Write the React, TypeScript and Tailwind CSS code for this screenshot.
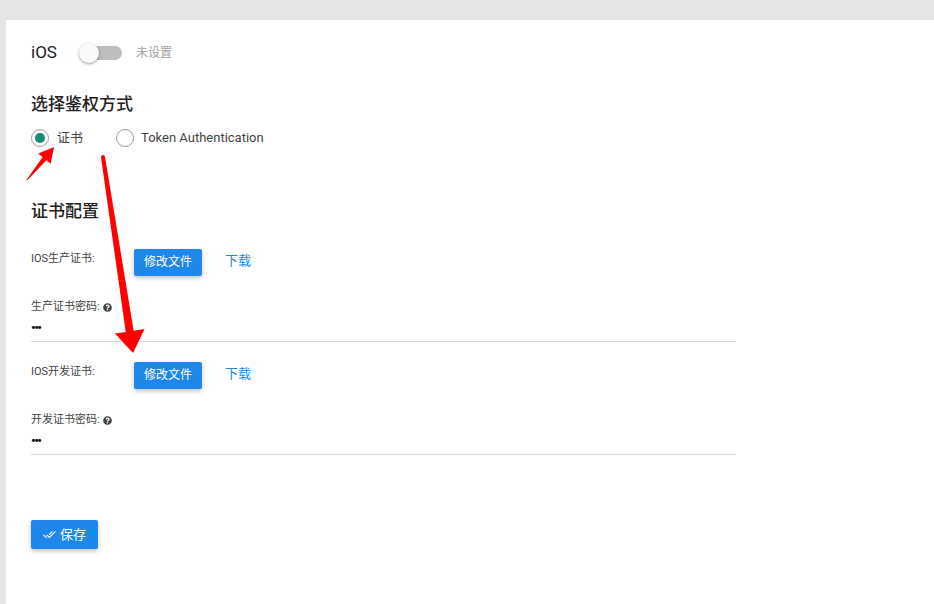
import React from "react";
import { FaQuestionCircle } from "react-icons/fa";
import { MdDoneAll } from "react-icons/md";

const font = { fontFamily: "Roboto, 'Noto Sans CJK SC', sans-serif" };

function CertRow({ label }: { label: string }) {
  return (
    <div className="flex items-start">
      <div className="w-[103px] pt-[2px] text-[11px] leading-[16px] text-[#424242]">{label}</div>
      <button className="h-[27px] px-[10px] rounded-[2px] bg-[#1f86ea] text-white text-[12px] leading-[27px] shadow-[0_2px_4px_rgba(0,0,0,0.25)]">
        修改文件
      </button>
      <span className="ml-[23px] mt-[4px] text-[13px] leading-[16px] text-[#1e88e5]">下载</span>
    </div>
  );
}

function PwdField({ label }: { label: string }) {
  return (
    <div className="w-[705px]">
      <div className="pt-[2px] flex items-center gap-[3px] text-[11px] leading-[16px] text-[#424242]">
        <span>{label}</span>
        <FaQuestionCircle className="w-[9px] h-[9px] text-[#424242]" />
      </div>
      <div className="mt-[3px] h-[24px] border-b border-[#d6d6d6]">
        <span className="block pt-[1px] text-[13px] leading-[18px] font-bold tracking-[-1.5px] text-[#111]">•••</span>
      </div>
    </div>
  );
}

export default function App() {
  return (
    <div className="relative w-[934px] h-[604px] bg-[#e5e5e5] pt-[20px] pl-[6px] overflow-hidden" style={font}>
      <div className="h-[584px] bg-white pl-[25px] pt-[13px]">
        {/* iOS row */}
        <div className="flex items-center h-[40px]">
          <span className="w-[48px] text-[17px] text-[#212121]">iOS</span>
          <div className="relative w-[43px] h-[20px] flex items-center justify-end">
            <div className="w-[34px] h-[14px] rounded-full bg-[#bdbdbd]" />
            <div className="absolute left-0 top-0 w-[20px] h-[20px] rounded-full bg-[#fafafa] shadow-[0_1px_3px_rgba(0,0,0,0.4)]" />
          </div>
          <span className="ml-[14px] text-[12px] text-[#9e9e9e]">未设置</span>
        </div>

        <div className="mt-[19px] h-[24px] leading-[24px] text-[17px] font-medium text-[#212121]">选择鉴权方式</div>

        <div className="mt-[10px] h-[24px] flex items-center">
          <div className="w-[18px] h-[18px] rounded-full border-[1.5px] border-[#9e9e9e] flex items-center justify-center">
            <div className="w-[10px] h-[10px] rounded-full bg-[#128a74]" />
          </div>
          <span className="ml-[8px] text-[13px] text-[#424242]">证书</span>
          <div className="ml-[33px] w-[18px] h-[18px] rounded-full border-[1.5px] border-[#9e9e9e]" />
          <span className="ml-[7px] text-[13px] text-[#424242]">Token Authentication</span>
        </div>

        <div className="mt-[49px] h-[24px] leading-[24px] text-[17px] font-medium text-[#212121]">证书配置</div>

        <div className="mt-[26px]">
          <CertRow label="IOS生产证书:" />
        </div>
        <div className="mt-[21px]">
          <PwdField label="生产证书密码:" />
        </div>
        <div className="mt-[20px]">
          <CertRow label="IOS开发证书:" />
        </div>
        <div className="mt-[21px]">
          <PwdField label="开发证书密码:" />
        </div>

        <button className="mt-[65px] h-[29px] px-[12px] flex items-center gap-[4px] rounded-[2px] bg-[#1f86ea] text-white text-[13px] shadow-[0_2px_4px_rgba(0,0,0,0.25)]">
          <MdDoneAll className="w-[13px] h-[13px]" />
          <span>保存</span>
        </button>
      </div>

      {/* red annotation arrows */}
      <svg className="absolute left-0 top-0 pointer-events-none" width="934" height="604" viewBox="0 0 934 604">
        <polygon fill="#ff0000" points="27.4,180.3 46.4,160.2 50.7,163.7 54,147 38.3,153.5 42.6,157 26.6,179.7" />
        <polygon fill="#ff0000" points="105,156.7 133.65,330.7 144.5,329 133,353 114.9,333.6 125.75,331.9 101,157.3" />
        <circle cx="103" cy="157" r="2" fill="#ff0000" />
      </svg>
    </div>
  );
}
